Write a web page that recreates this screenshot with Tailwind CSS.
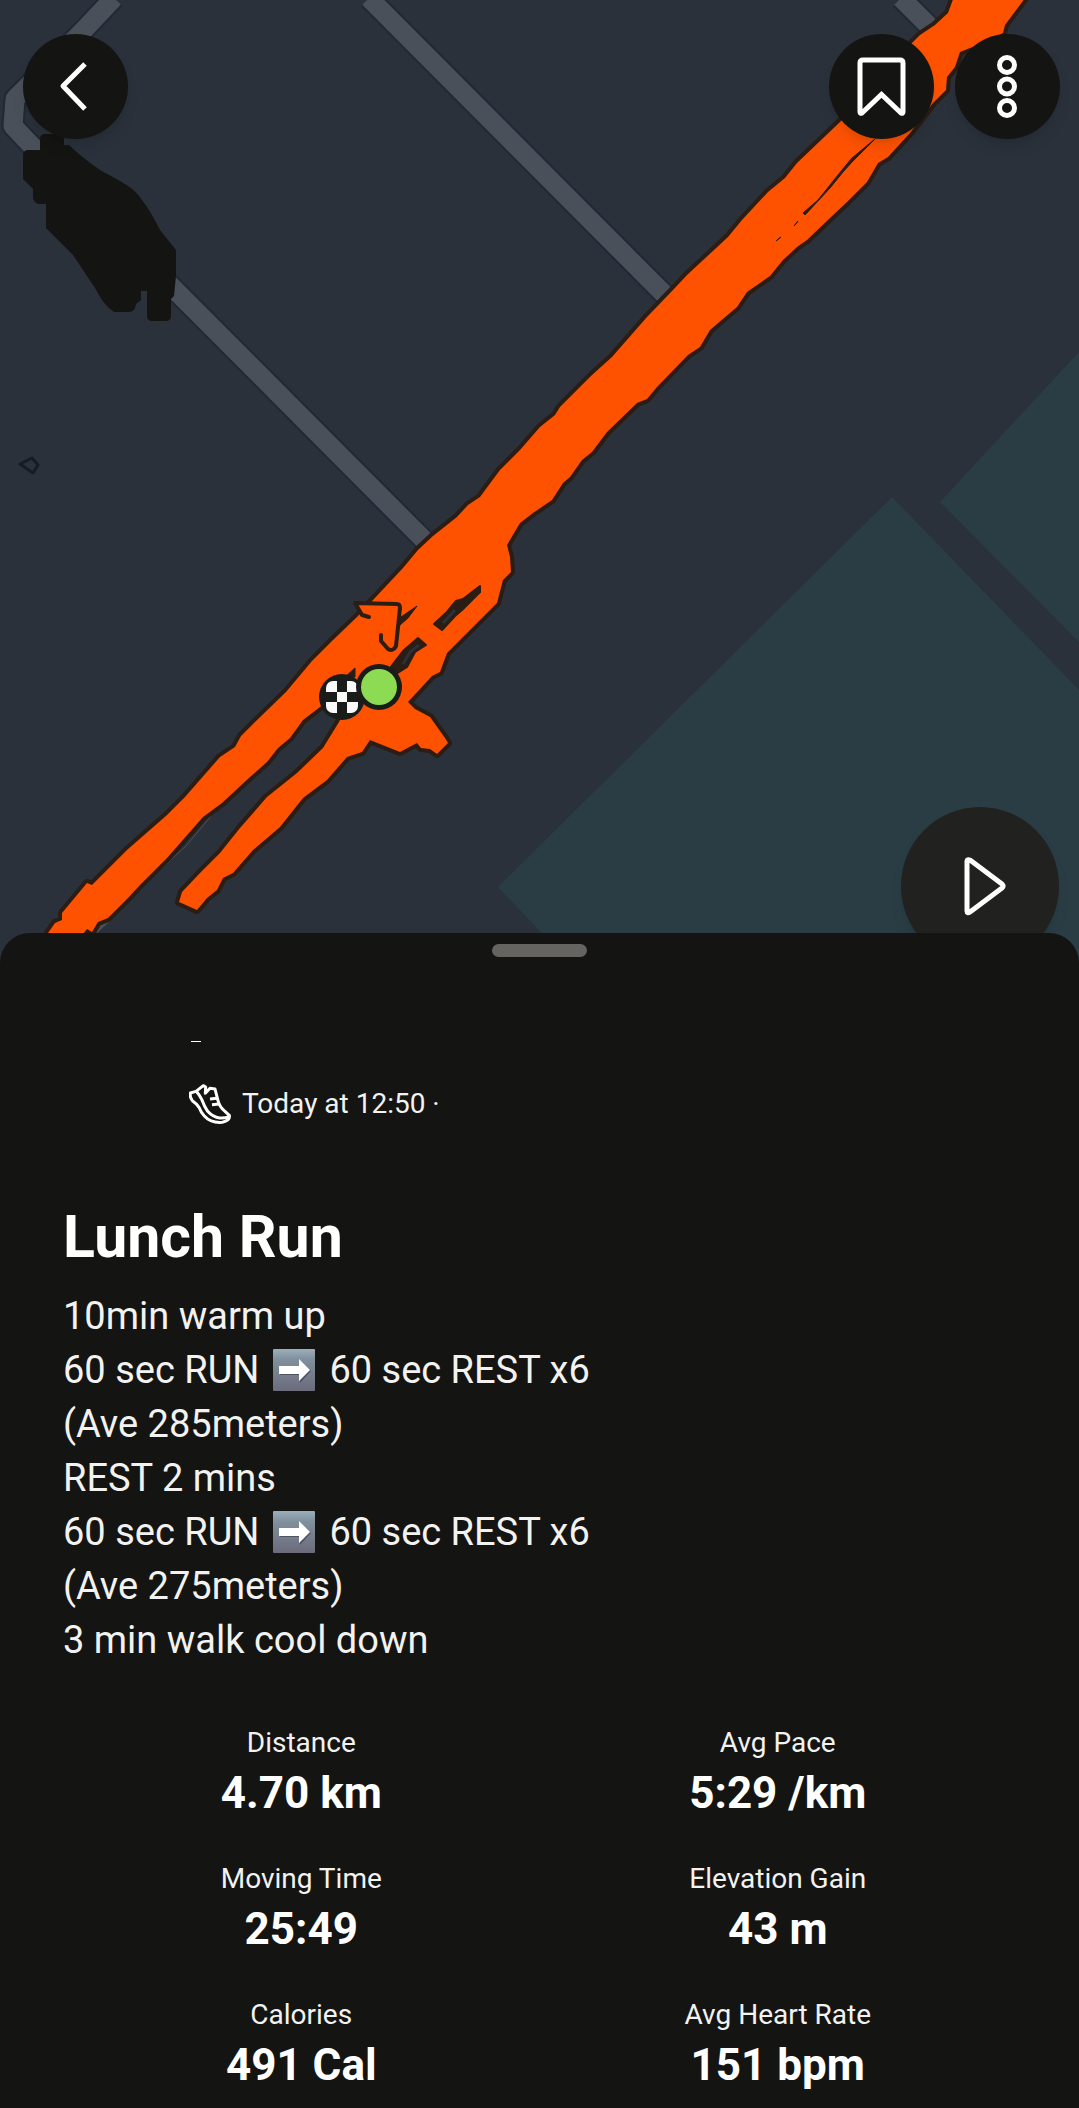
<!DOCTYPE html>
<html lang="en">
<head>
  <meta charset="UTF-8" />
  <meta name="viewport" content="width=device-width, initial-scale=1.0" />
  <title>Lunch Run</title>
  <script src="https://cdn.jsdelivr.net/npm/@tailwindcss/browser@4"></script>
</head>
<body class="bg-[#141412] text-[#f2f2f0] font-[Roboto,'Liberation_Sans',sans-serif]">

  <!-- Map -->
  <section class="relative h-[963px] overflow-hidden bg-[#2a313b]">
    <svg class="absolute inset-0 w-full h-full" viewBox="0 0 1079 963" preserveAspectRatio="xMidYMin slice" aria-hidden="true">
      <!-- parks -->
      <path fill="#2a3d45" d="M892 497L1079 690V963H570L498 887Z M940 502L1079 352V642Z" />

      <!-- roads -->
      <g fill="none" stroke-linejoin="round">
        <path stroke="#212836" stroke-width="23" d="M114 -2L80 34L15 99L13 126L32 146L176 291L426 542M369 -2L664 294M901 -2L935 32" />
        <path stroke="#495059" stroke-width="19" d="M114 -2L80 34L15 99L13 126L32 146L176 291L426 542M369 -2L664 294M901 -2L935 32" />
        <path stroke="#495059" stroke-width="1" d="M211 816L186 846L153 876M132 898L118 912" />
        <path fill="#495059" d="M110 921L96 934L98 926Z" />
      </g>
      <path fill="none" stroke="#151c26" stroke-width="3" stroke-linejoin="round" d="M20 464L32 458L38 465L33 473Z" />

      <!-- redacted area -->
      <path fill="#141412" d="M44 134H60Q64 134 64 138V145H69Q80 156 100 170L120 181Q135 189 142 200Q150 210 160 230L176 250V276L174 296L171 299V317Q170 321 166 321H151Q147 320 147 316V291H141V300L136 304Q135 312 129 312H114Q104 306 95 288L73 255L46 228V204H38Q33 202 33 197V189L23 179V154Q24 150 28 150H40V138Q41 134 44 134Z" />

      <!-- route -->
      <path fill="#fe5200" stroke="#2b1c14" stroke-width="8" stroke-linejoin="round" paint-order="stroke" d="M955 -6L948 13L935 25L920 35L912 43L870 90L840 122L797 163L785 178L768 192L742 220L728 237L687 275L673 290L647 317L612 357L592 375L560 407L555 415L540 427L520 450L500 470L480 497L468 505L457 517L433 536L418 550L403 568L373 600L357 617L333 640L312 661L286 692L255 722L241 736L235 747L220 757L185 797L167 815L127 850L92 885L87 883L62 913L62 920L55 923L48 933L40 948L80 948L83 934L87 929L92 932L98 922L108 918L128 898L140 885L167 858L203 817L222 803L250 777L267 762L278 748L290 738L303 720L320 707L345 690L350 700L339 722L323 748L297 773L267 797L240 828L220 853L200 873L182 892L179 902L197 910L207 898L217 890L223 878L233 873L253 850L280 827L303 798L327 780L347 757L362 752L370 740L400 752L417 743L421 748L430 749L437 754L448 743L445 738L430 717L415 709L408 702L432 676L440 672L447 653L467 633L497 603L503 580L511 572L510 557L507 545L520 523L533 513L552 500L563 483L570 477L582 460L592 452L607 432L637 403L647 399L657 387L688 355L700 347L710 330L737 307L747 292L770 276L783 260L797 247L807 240L830 218L847 202L867 182L878 163L888 157L910 133L933 103L946 90L947 77L955 67L960 52L985 42L1003 33L1005 25L1028 -6Z" />

      <!-- gaps between laps -->
      <g fill="#2b1c14" stroke="#2b1c14" stroke-linejoin="round">
        <path d="M875 139L852 162L843 172L830 188L805 215L803 213L818 200L830 185L842 170L852 158Z" />
        <path d="M798 221L794 226L795 225Z M781 237L776 241L777 240Z" />
        <path d="M417 606L408 618L400 625L401 617Z M355 668L355 677L345 677Z" />
        <path stroke-width="2" d="M434 624L442 630L455 616L462 610L480 592L480 586L463 599L456 601L447 612Z" />
        <path stroke-width="2" d="M418 638L426 645L415 652L407 667L396 674L390 668L403 651Z" />
      </g>
      <path fill="none" stroke="#2a313b" stroke-width="3" d="M419 645L410 652L403 664M455 610L443 623" />

      <!-- direction arrow -->
      <path fill="#fe5200" d="M355 603L400 604L396 647L391 651L381 637L384 618L362 615Z" />
      <path fill="none" stroke="#2b1c14" stroke-width="4" stroke-linejoin="round" stroke-linecap="round" d="M369 617L362 615L355 603L397 604Q400 604 400 608L396 646Q393 652 388 649L381 641V635" />

      <!-- finish and start pins -->
      <circle cx="342" cy="697" r="23" fill="#1a1c1a" />
      <clipPath id="flag"><rect x="326" y="681" width="32" height="32" rx="7" /></clipPath>
      <path clip-path="url(#flag)" fill="#fafafa" d="M326 681H337V692H326Z M347 681H358V692H347Z M337 692H347V702H337Z M326 702H337V713H326Z M347 702H358V713H347Z" />
      <circle cx="379" cy="687" r="23" fill="#1a1c1a" />
      <circle cx="379" cy="687" r="18" fill="#8cdb53" />
    </svg>

    <header class="relative flex items-start gap-[21px] pt-[34px] pl-[23px] pr-[19px]">
      <button type="button" aria-label="Back" class="w-[105px] h-[105px] mr-auto rounded-full bg-[#141412] shadow-lg">
        <svg viewBox="0 0 105 105" fill="none" stroke="#fff" stroke-width="5" stroke-linejoin="round"><path d="M62 30L40 52L62 75" /></svg>
      </button>
      <button type="button" aria-label="Save" class="w-[105px] h-[105px] rounded-full bg-[#141412] shadow-lg">
        <svg viewBox="0 0 105 105" fill="none" stroke="#fff" stroke-width="5"><path d="M34 26H71Q74 26 74 29V78Q74 80 72 79L52.500 60.500L33 79Q31 80 31 78V29Q31 26 34 26Z" /></svg>
      </button>
      <button type="button" aria-label="More options" class="w-[105px] h-[105px] rounded-full bg-[#141412] shadow-lg">
        <svg viewBox="0 0 105 105" fill="none" stroke="#fff" stroke-width="5"><circle cx="52" cy="31" r="7.500" /><circle cx="52" cy="52.500" r="7.500" /><circle cx="52" cy="74" r="7.500" /></svg>
      </button>
    </header>

    <button type="button" aria-label="Play flyover" class="absolute right-5 -bottom-0.5 w-[158px] h-[158px] rounded-full bg-[#21211f] shadow-lg">
      <svg viewBox="0 0 158 158" fill="none" stroke="#fff" stroke-width="5" stroke-linejoin="round"><path d="M66 54Q66 52 69 53L101 77Q103 79 101 81L69 105Q66 107 66 104Z" /></svg>
    </button>
  </section>

  <!-- Activity sheet -->
  <main class="relative -mt-[30px] rounded-t-[30px] bg-[#141412] px-[63px] pt-[11px] pb-[15px]">
    <div class="w-[95px] h-[13px] mx-auto rounded-full bg-[#656460]"></div>

    <div class="mt-[84px] pl-[126px]">
      <div class="w-2.5 h-px ml-0.5 bg-white"></div>
      <div class="mt-[42px] flex items-center gap-[11px]">
        <svg class="w-[42px] h-10" viewBox="0 0 126 120" fill="none" stroke="#fff" stroke-width="9" stroke-linejoin="round" aria-hidden="true">
          <path d="M4 27L21 22L43 5L50 9L49 28L63 13L78 15L87 50Q92 70 108 82L121 94Q124 110 100 115Q66 118 46 96Q36 86 30 70Q22 58 10 50Q2 40 4 27Z" />
          <path d="M22 22Q32 34 38 46Q46 68 56 82Q72 100 92 102Q110 103 121 97M63 45L84 43M69 62L90 60" />
        </svg>
        <p class="text-[28px] leading-10">Today at 12:50 ·</p>
      </div>
    </div>

    <h1 class="mt-20 text-[59px] leading-[66px] font-bold text-white">Lunch Run</h1>

    <div class="mt-[19px] text-[38px] leading-[54px]">
      <p>10min warm up</p>
      <p class="flex items-center gap-3.5">60 sec RUN
        <svg class="w-[42px] h-[42px]" viewBox="0 0 42 42" role="img" aria-label="right arrow">
          <defs><linearGradient id="tile" x2="0" y2="1"><stop stop-color="#9aafb9" /><stop offset=".25" stop-color="#80909d" /><stop offset="1" stop-color="#6b6b7c" /></linearGradient></defs>
          <rect width="42" height="42" rx="1" fill="url(#tile)" />
          <path fill="#4f5563" d="M7 19H27V12L38 22L27 34V26H7Z" />
          <path fill="#fff" d="M6 17H26V10L37 21L26 32V25H6Z" />
        </svg>
        60 sec REST x6</p>
      <p>(Ave 285meters)</p>
      <p>REST 2 mins</p>
      <p class="flex items-center gap-3.5">60 sec RUN
        <svg class="w-[42px] h-[42px]" viewBox="0 0 42 42" role="img" aria-label="right arrow">
          <rect width="42" height="42" rx="1" fill="url(#tile)" />
          <path fill="#4f5563" d="M7 19H27V12L38 22L27 34V26H7Z" />
          <path fill="#fff" d="M6 17H26V10L37 21L26 32V25H6Z" />
        </svg>
        60 sec REST x6</p>
      <p>(Ave 275meters)</p>
      <p>3 min walk cool down</p>
    </div>

    <dl class="mt-[58px] grid grid-cols-2 gap-y-10 text-center">
      <div>
        <dt class="text-[28px] leading-9">Distance</dt>
        <dd class="mt-1 text-[44px] leading-[56px] font-bold text-white">4.70 km</dd>
      </div>
      <div>
        <dt class="text-[28px] leading-9">Avg Pace</dt>
        <dd class="mt-1 text-[44px] leading-[56px] font-bold text-white">5:29 /km</dd>
      </div>
      <div>
        <dt class="text-[28px] leading-9">Moving Time</dt>
        <dd class="mt-1 text-[44px] leading-[56px] font-bold text-white">25:49</dd>
      </div>
      <div>
        <dt class="text-[28px] leading-9">Elevation Gain</dt>
        <dd class="mt-1 text-[44px] leading-[56px] font-bold text-white">43 m</dd>
      </div>
      <div>
        <dt class="text-[28px] leading-9">Calories</dt>
        <dd class="mt-1 text-[44px] leading-[56px] font-bold text-white">491 Cal</dd>
      </div>
      <div>
        <dt class="text-[28px] leading-9">Avg Heart Rate</dt>
        <dd class="mt-1 text-[44px] leading-[56px] font-bold text-white">151 bpm</dd>
      </div>
    </dl>
  </main>
</body>
</html>
